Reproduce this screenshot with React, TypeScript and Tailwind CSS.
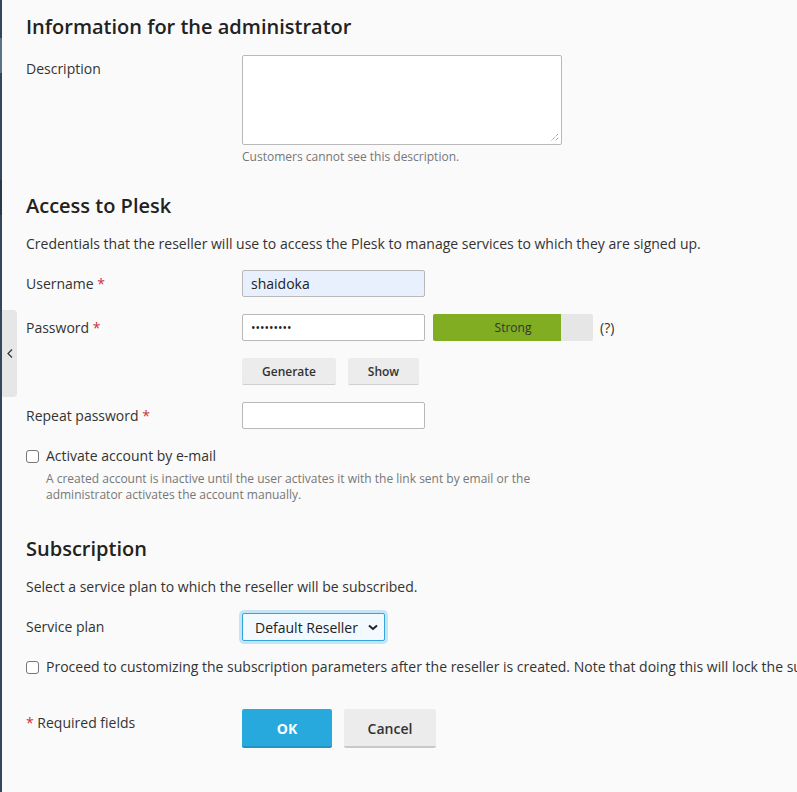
import React from 'react';

const font = { fontFamily: '"Open Sans", "Noto Sans", sans-serif' };

function Req() {
  return <span className="text-[#d02d3a]"> *</span>;
}

function Checkbox() {
  return <span className="inline-block w-[13px] h-[13px] shrink-0 border border-[#767676] rounded-[3px] bg-white" />;
}

function Row({ label, children, className = '' }: { label: React.ReactNode; children: React.ReactNode; className?: string }) {
  return (
    <div className={`flex items-center ${className}`}>
      <div className="w-[216px] shrink-0 text-[14px] leading-5 text-[#333]">{label}</div>
      <div className="flex items-center">{children}</div>
    </div>
  );
}

export default function App() {
  const strength = 80;

  return (
    <div className="relative flex w-[797px] min-h-[792px] bg-[#fafafa] overflow-hidden text-[#333]" style={font}>
      {/* left frame stripe */}
      <div className="w-[2px] shrink-0 flex flex-col">
        <div className="h-[38px] bg-[#34465a]" />
        <div className="h-[35px] bg-[#5b7384]" />
        <div className="h-[107px] bg-[#34465a]" />
        <div className="h-[35px] bg-[#283848]" />
        <div className="flex-1 bg-[#34465a]" />
      </div>

      {/* sidebar toggle */}
      <div className="absolute left-[2px] top-[310px] w-[15px] h-[87px] bg-[#e6e6e6] rounded-r-[4px] flex items-center justify-center">
        <svg width="6" height="9" viewBox="0 0 6 9" fill="none" stroke="#333" strokeWidth="1.2">
          <path d="M5 0.5 L1 4.5 L5 8.5" />
        </svg>
      </div>

      <div className="flex-1 pl-[24px] pt-[13px] whitespace-nowrap">
        <h2 className="text-[20px] leading-7 font-semibold text-[#222]">Information for the administrator</h2>

        <div className="flex items-start mt-[14px]">
          <div className="w-[216px] shrink-0 pt-[4px] text-[14px] leading-5">Description</div>
          <div>
            <div className="relative w-[320px] h-[90px] bg-white border border-[#b8b8b8] rounded-[2px]">
              <svg className="absolute right-[2px] bottom-[2px]" width="9" height="9" viewBox="0 0 9 9" stroke="#777" strokeWidth="1" strokeDasharray="1 1">
                <path d="M8 1 L1 8 M8 5 L5 8" />
              </svg>
            </div>
            <div className="mt-[4px] text-[12px] leading-4 text-[#777]">Customers cannot see this description.</div>
          </div>
        </div>

        <h2 className="mt-[27px] text-[20px] leading-7 font-semibold text-[#222]">Access to Plesk</h2>
        <p className="mt-[14px] text-[14px] leading-5">
          Credentials that the reseller will use to access the Plesk to manage services to which they are signed up.
        </p>

        <Row className="mt-[16px]" label={<>Username<Req /></>}>
          <div className="w-[183px] h-[27px] px-[8px] bg-[#e8f0fe] border border-[#b8b8b8] rounded-[2px] flex items-center text-[14px] text-[#222]">
            shaidoka
          </div>
        </Row>

        <Row className="mt-[17px]" label={<>Password<Req /></>}>
          <input
            type="password"
            readOnly
            defaultValue="123456789"
            className="w-[183px] h-[27px] px-[8px] bg-white border border-[#b8b8b8] rounded-[2px] text-[12px] text-[#222] outline-none"
          />
          <div className="relative ml-[8px] w-[160px] h-[27px] bg-[#e6e6e6] rounded-[2px]">
            <div className="h-full bg-[#80ad22] rounded-l-[2px]" style={{ width: `${strength}%` }} />
            <span className="absolute inset-0 flex items-center justify-center text-[12px] text-[#333]">Strong</span>
          </div>
          <span className="ml-[7px] text-[14px]">(?)</span>
        </Row>

        <div className="flex gap-[12px] mt-[17px] ml-[216px]">
          <button className="w-[94px] h-[27px] pt-[2px] bg-[#ececec] border-b border-[#cfcfcf] rounded-[2px] text-[12px] font-semibold text-[#333]">Generate</button>
          <button className="w-[71px] h-[27px] pt-[2px] bg-[#ececec] border-b border-[#cfcfcf] rounded-[2px] text-[12px] font-semibold text-[#333]">Show</button>
        </div>

        <Row className="mt-[17px]" label={<>Repeat password<Req /></>}>
          <div className="w-[183px] h-[27px] bg-white border border-[#b8b8b8] rounded-[2px]" />
        </Row>

        <div className="flex items-center gap-[7px] mt-[17px] text-[14px] leading-5">
          <Checkbox />
          <span>Activate account by e-mail</span>
        </div>
        <div className="mt-[5px] ml-[20px] text-[12px] leading-4 text-[#777]">
          <div>A created account is inactive until the user activates it with the link sent by email or the</div>
          <div>administrator activates the account manually.</div>
        </div>

        <h2 className="mt-[32px] text-[20px] leading-7 font-semibold text-[#222]">Subscription</h2>
        <p className="mt-[14px] text-[14px] leading-5">Select a service plan to which the reseller will be subscribed.</p>

        <Row className="mt-[16px]" label="Service plan">
          <div className="w-[143px] h-[28px] pl-[12px] pr-[6px] pt-[1px] bg-[#f2f9ff] border border-[#36a3d9] rounded-[2px] ring-[3px] ring-[#c4e4f8] flex items-center justify-between text-[14px] text-[#222]">
            <span>Default Reseller</span>
            <svg width="10" height="7" viewBox="0 0 10 7" fill="none" stroke="#222" strokeWidth="2">
              <path d="M1 1.5 L5 5 L9 1.5" />
            </svg>
          </div>
        </Row>

        <div className="flex items-center gap-[7px] mt-[16px] text-[14px] leading-5">
          <Checkbox />
          <span>Proceed to customizing the subscription parameters after the reseller is created. Note that doing this will lock the subscription.</span>
        </div>

        <div className="flex items-start mt-[32px]">
          <div className="w-[216px] shrink-0 pt-[4px] text-[14px] leading-5">
            <span className="text-[#d02d3a]">*</span> Required fields
          </div>
          <div className="flex gap-[12px]">
            <button className="w-[90px] h-[39px] pt-[2px] bg-[#28a9de] border-b-2 border-[#2393c2] rounded-[2px] text-[14px] font-bold text-white">OK</button>
            <button className="w-[92px] h-[39px] pt-[2px] bg-[#ececec] border-b-2 border-[#c9c9c9] rounded-[2px] text-[14px] font-semibold text-[#333]">Cancel</button>
          </div>
        </div>
      </div>
    </div>
  );
}
